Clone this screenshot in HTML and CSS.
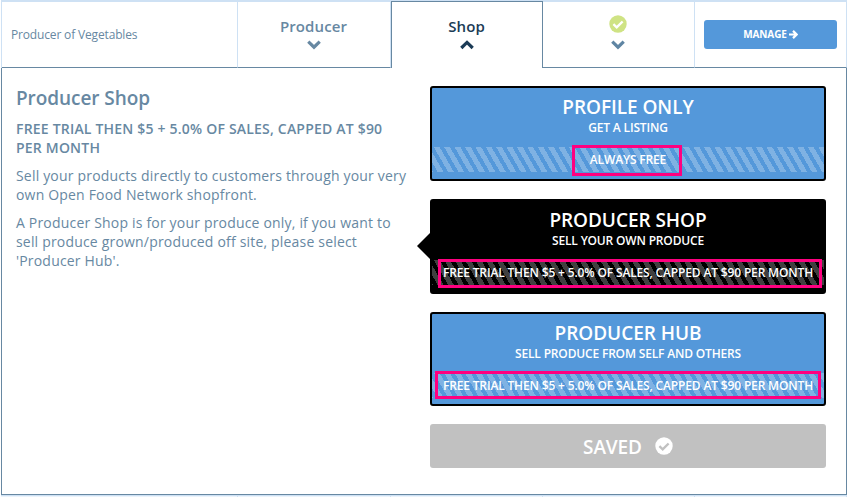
FILE: index.html
```html
<!DOCTYPE html>
<html lang="en">
<head>
<meta charset="utf-8">
<title>Producer Shop</title>
<link rel="stylesheet" href="styles.css">
</head>
<body>
<main class="enterprise">
  <header class="tabs">
    <div class="tab tab-name">Producer of Vegetables</div>
    <div class="tab"><span>Producer</span>
      <svg class="chevron" viewBox="0 0 14 10"><path d="M1.3 1.6 7 7.2 12.7 1.6"/></svg></div>
    <div class="tab tab-active"><span>Shop</span>
      <svg class="chevron" viewBox="0 0 14 10"><path d="M1.3 8 7 2.4 12.7 8"/></svg></div>
    <div class="tab tab-status">
      <svg class="ok" viewBox="0 0 18 18"><circle cx="9" cy="9" r="8.7"/><path d="M4.4 9.2 7.7 12.3 13.6 6.5"/></svg>
      <svg class="chevron" viewBox="0 0 14 10"><path d="M1.3 1.6 7 7.2 12.7 1.6"/></svg></div>
    <div class="tab tab-manage"><a class="manage">MANAGE <svg viewBox="0 0 9 9"><path d="M0 4.5H7M4 .9 7.6 4.5 4 8.1"/></svg></a></div>
  </header>
  <section class="panel">
    <div class="about">
      <h2>Producer Shop</h2>
      <h3>FREE TRIAL THEN $5 + 5.0% OF SALES, CAPPED AT $90 PER MONTH</h3>
      <p>Sell your products directly to customers through your very own Open Food Network shopfront.</p>
      <p>A Producer Shop is for your produce only, if you want to sell produce grown/produced off site, please select 'Producer Hub'.</p>
    </div>
    <div class="options">
      <div class="card">
        <div class="title">PROFILE ONLY</div><div class="sub">GET A LISTING</div>
        <div class="price">ALWAYS FREE</div><i class="mark mark-free"></i>
      </div>
      <div class="card selected">
        <div class="title">PRODUCER SHOP</div><div class="sub">SELL YOUR OWN PRODUCE</div>
        <div class="price">FREE TRIAL THEN $5 + 5.0% OF SALES, CAPPED AT $90 PER MONTH</div><i class="mark mark-shop"></i>
      </div>
      <div class="card last">
        <div class="title">PRODUCER HUB</div><div class="sub">SELL PRODUCE FROM SELF AND OTHERS</div>
        <div class="price">FREE TRIAL THEN $5 + 5.0% OF SALES, CAPPED AT $90 PER MONTH</div><i class="mark mark-hub"></i>
      </div>
      <div class="saved"><span>SAVED</span><svg class="ok" viewBox="0 0 18 18"><circle cx="9" cy="9" r="8.7"/><path d="M4.4 9.2 7.7 12.3 13.6 6.5"/></svg></div>
    </div>
  </section>
  <footer class="next-row"><i></i><i></i><i></i><i></i><i></i></footer>
</main>
</body>
</html>
```
FILE: styles.css
```css
* { box-sizing: border-box; }
body { margin: 0; background: #fff; color: #6788a2; font-family: "Open Sans", sans-serif; overflow: hidden; }
.enterprise { width: 846px; margin-left: 1px; }
.tabs, .next-row { display: grid; grid-template-columns: 237px 153px 152px 152px 152px; }
.tabs { height: 68px; background: linear-gradient(#cee1f4, #cee1f4) 0 0 / 100% 2px no-repeat; border-left: 1px solid #cee1f4; grid-template-columns: 236px 153px 152px 152px 152px; }
.tab { border-right: 1px solid #cee1f4; border-bottom: 1px solid #6788a2; display: flex; flex-direction: column; align-items: center; padding: 16px 1px 0 0; font-size: 15px; font-weight: 600; line-height: 21px; letter-spacing: .1px; }
.tab-name { align-items: flex-start; justify-content: center; padding: 2px 0 0 9px; font-size: 12px; font-weight: 400; letter-spacing: -.16px; }
.tab-active { margin-top: 1px; padding-top: 14px; background: #fff; color: #1b3b56; border: 1px solid #6788a2; border-bottom: 0; }
.tab-manage { padding: 20px 9px 0; align-items: stretch; }
.chevron { width: 14px; height: 10px; margin-top: 3px; fill: none; stroke: currentColor; stroke-width: 3.2; }
.ok { width: 18px; height: 18px; fill: #cfe384; }
.ok path { fill: none; stroke: #fff; stroke-width: 2.4; }
.tab-status { padding-top: 15px; padding-right: 1px; }
.tab-status .chevron { margin-top: 7px; color: #5f85a3; }
.manage { height: 29px; border-radius: 3px; background: #5498da; color: #fff; display: flex; align-items: center; justify-content: center; gap: 2px; font-size: 10px; font-weight: 700; letter-spacing: -.1px; }
.manage svg { width: 9px; height: 9px; fill: none; stroke: #fff; stroke-width: 2.2; }
.panel { height: 427px; border: 1px solid #6788a2; border-top: 0; display: flex; }
.about { width: 428px; padding: 18px 18px 0 14px; }
h2 { margin: 0 0 9px; font-size: 19px; line-height: 24px; font-weight: 600; letter-spacing: -.06px; }
h3 { margin: 0 0 9px; font-size: 14px; line-height: 19px; font-weight: 600; letter-spacing: .2px; }
p { margin: 0 0 9px; font-size: 14px; line-height: 19px; letter-spacing: .185px; }
.options { width: 396px; padding-top: 18px; color: #fff; font-weight: 600; text-align: center; }
.card { position: relative; height: 95px; margin-bottom: 18px; padding-top: 7px; border: 2px solid #000; border-radius: 3px; background: #5498da; }
.last { height: 94px; }
.title { font-size: 19px; line-height: 24px; letter-spacing: -.05px; }
.sub { font-size: 12px; line-height: 17px; margin-bottom: 11px; letter-spacing: -.17px; }
.price { height: 25px; font-size: 12px; line-height: 25px; letter-spacing: -.155px; white-space: nowrap; background: repeating-linear-gradient(60deg, rgba(255,255,255,.25) 0 1px, rgba(255,255,255,0) 1px 5px, rgba(255,255,255,.25) 5px 9px); }
.selected { background: #000; }
.selected::before { content: ""; position: absolute; left: -15px; top: 32px; border: 13px solid transparent; border-left: 0; border-right-color: #000; }
.mark { position: absolute; border: 3px solid #ff0080; }
.mark-free { left: 140px; top: 57px; width: 110px; height: 31px; }
.mark-shop { left: 6px; top: 58px; width: 384px; height: 29px; }
.mark-hub { left: 3px; top: 57px; width: 386px; height: 28px; }
.saved { height: 44px; border-radius: 3px; background: #c1c1c1; display: flex; align-items: center; justify-content: center; gap: 13px; font-size: 19px; letter-spacing: -.1px; padding-top: 2px; }
.saved .ok { fill: #fff; margin-top: -2px; }
.saved .ok path { stroke: #c1c1c1; }
.next-row { height: 2px; border-top: 1px solid #cee1f4; background: #ebf3fb; }
.next-row i { height: 1px; border-right: 1px solid #cee1f4; }
```
